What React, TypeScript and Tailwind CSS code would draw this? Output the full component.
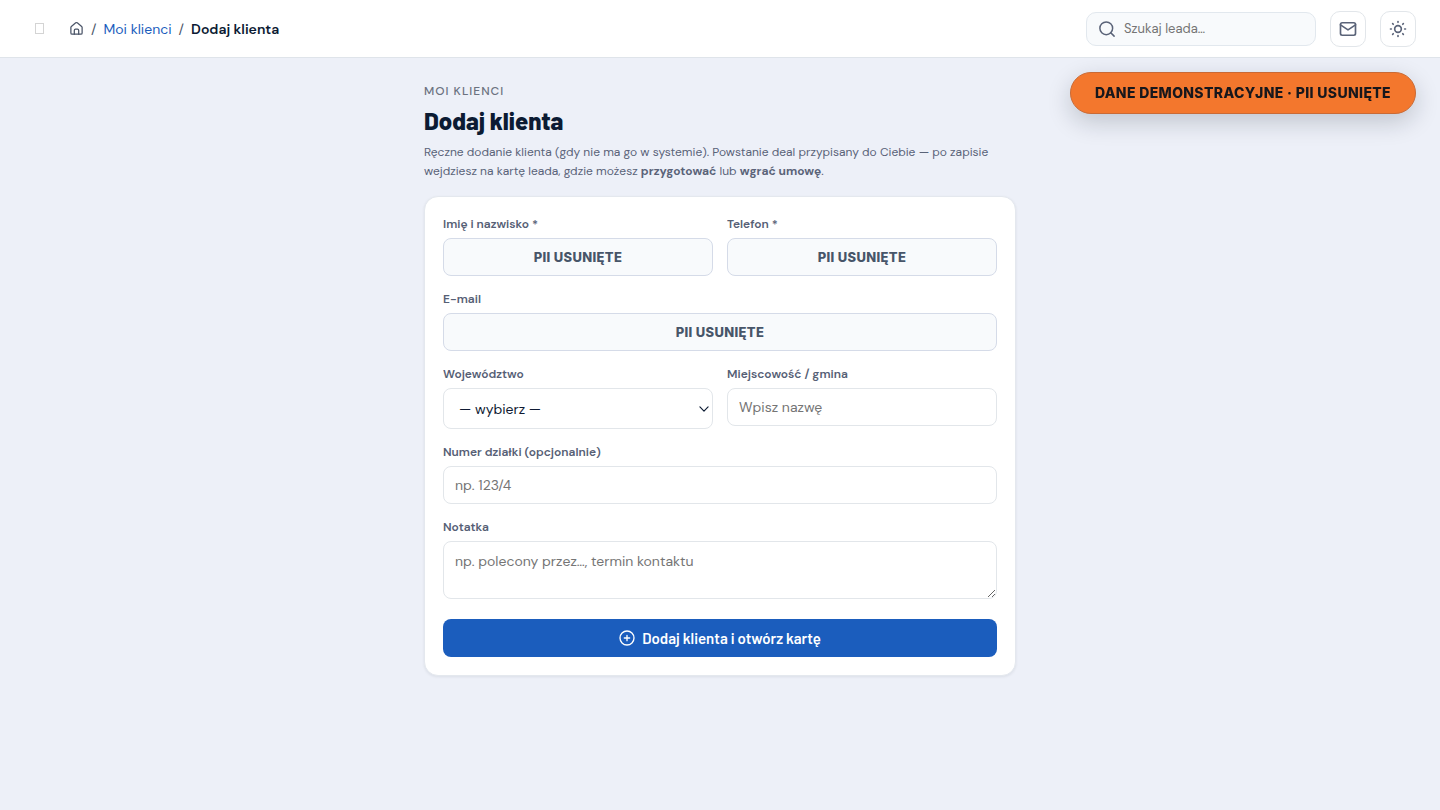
import type { ReactNode } from "react";

function PageIcon({ children, className }: { children: ReactNode; className: string }) {
  return (
    <svg
      viewBox="0 0 24 24"
      fill="none"
      stroke="currentColor"
      strokeWidth="2"
      strokeLinecap="round"
      strokeLinejoin="round"
      aria-hidden="true"
      className={className}
    >
      {children}
    </svg>
  );
}

const labelClass = "block truncate text-xs leading-[18px] font-semibold text-[#566075]";
const inputClass =
  "block h-[38px] w-full rounded-lg border border-[#e2e6ea] bg-white px-[11px] text-sm text-[#0f1b33] placeholder:text-[#757575]";
const redactedClass =
  "block h-[38px] w-full rounded-lg border border-[#d5dbe8] bg-[#f8fafc] px-[11px] text-center font-['Inter',sans-serif] text-[13px] font-extrabold tracking-wide text-[#475569]";

function Field({ id, label, wide, children }: { id: string; label: string; wide?: boolean; children: ReactNode }) {
  return (
    <div className={wide ? "flex flex-col gap-[5px] sm:col-span-2" : "flex flex-col gap-[5px]"}>
      <label htmlFor={id} className={labelClass}>
        {label}
      </label>
      {children}
    </div>
  );
}

function Header() {
  return (
    <header className="flex min-h-[58px] items-center justify-between gap-4 border-b border-[#dfe4ea] bg-white pr-6 pl-[35px]">
      <div className="flex items-center gap-[25px]">
        <button type="button" aria-label="Menu" className="h-[11px] w-[9px] border border-[#d4d4d4]" />
        <nav aria-label="Breadcrumb">
          <ol className="flex items-center gap-[7px] text-sm leading-5 text-[#4b5568]">
            <li>
              <a href="#start" aria-label="Start">
                <PageIcon className="h-[15px] w-[15px]">
                  <path d="M3 10.2a2 2 0 0 1 .75-1.55l7-5.7a2 2 0 0 1 2.5 0l7 5.7A2 2 0 0 1 21 10.2V19a2 2 0 0 1-2 2H5a2 2 0 0 1-2-2Z" />
                  <path d="M8.5 21v-6a2 2 0 0 1 2-2h3a2 2 0 0 1 2 2v6" />
                </PageIcon>
              </a>
            </li>
            <li aria-hidden="true">/</li>
            <li>
              <a href="#klienci" className="text-[#1b5dbd]">
                Moi klienci
              </a>
            </li>
            <li aria-hidden="true">/</li>
            <li aria-current="page" className="font-semibold text-[#0c1b33]">
              Dodaj klienta
            </li>
          </ol>
        </nav>
      </div>
      <div className="flex items-center gap-[14px] text-[#5a6378]">
        <label className="flex h-[34px] w-[230px] items-center gap-2 rounded-[10px] border border-[#e2e8ee] bg-[#f8fafc] px-[11px]">
          <PageIcon className="h-[18px] w-[18px] shrink-0">
            <circle cx="11" cy="11" r="8.5" />
            <path d="m21.5 21.5-4.5-4.5" />
          </PageIcon>
          <input
            type="search"
            aria-label="Szukaj leada"
            placeholder="Szukaj leada…"
            className="w-full min-w-0 bg-transparent text-[13px] placeholder:text-[#757575]"
          />
        </label>
        <button
          type="button"
          aria-label="Wiadomości"
          className="flex h-9 w-9 items-center justify-center rounded-[10px] border border-[#e2e6ea] bg-white"
        >
          <PageIcon className="h-5 w-5">
            <rect x="3" y="4.5" width="18" height="15" rx="2" />
            <path d="m3 7 9 6 9-6" />
          </PageIcon>
        </button>
        <button
          type="button"
          aria-label="Motyw"
          className="flex h-9 w-9 items-center justify-center rounded-[10px] border border-[#e2e6ea] bg-white"
        >
          <PageIcon className="h-5 w-5">
            <circle cx="12" cy="12" r="4" />
            <path d="M3 12h1M12 3v1M20 12h1M12 20v1M5.6 5.6l.7.7M18.4 5.6l-.7.7M17.7 17.7l.7.7M6.3 17.7l-.7.7" />
          </PageIcon>
        </button>
      </div>
    </header>
  );
}

export default function App() {
  return (
    <div className="min-h-screen bg-[#edf0f8] font-['DM_Sans',Inter,sans-serif] text-[#0c1b33]">
      <Header />
      <div className="fixed top-[72px] right-6 rounded-full border border-[#c96a35] bg-[#f3772d] px-6 py-[10px] font-['Inter',sans-serif] text-sm leading-5 font-extrabold tracking-wide text-[#17171c] shadow-[0_8px_24px_rgba(15,23,42,0.2)]">
        DANE DEMONSTRACYJNE · PII USUNIĘTE
      </div>
      <main className="mx-auto max-w-[592px] pt-6 pb-10">
        <p className="text-xs leading-[18px] font-medium tracking-[1px] text-[#6b7280]">MOI KLIENCI</p>
        <h1 className="mt-[6px] font-['Barlow',Roboto,sans-serif] text-2xl leading-[30px] font-extrabold">
          Dodaj klienta
        </h1>
        <p className="mt-[7px] text-xs leading-[19px] text-[#5a6378]">
          Ręczne dodanie klienta (gdy nie ma go w systemie). Powstanie deal przypisany do Ciebie — po zapisie wejdziesz
          na kartę leada, gdzie możesz <strong className="font-bold">przygotować</strong> lub{" "}
          <strong className="font-bold">wgrać umowę</strong>.
        </p>
        <form className="mt-[15px] rounded-[14px] border border-[#e4e8ee] bg-white p-[18px] shadow-[0_1px_3px_rgba(15,23,42,0.08)]">
          <div className="grid grid-cols-1 gap-[14px] sm:grid-cols-2">
            <Field id="name" label="Imię i nazwisko *">
              <input id="name" type="text" required defaultValue="PII USUNIĘTE" className={redactedClass} />
            </Field>
            <Field id="phone" label="Telefon *">
              <input id="phone" type="text" required defaultValue="PII USUNIĘTE" className={redactedClass} />
            </Field>
            <Field id="email" label="E-mail" wide>
              <input id="email" type="text" defaultValue="PII USUNIĘTE" className={redactedClass} />
            </Field>
            <Field id="region" label="Województwo">
              <div className="grid items-center">
                <select
                  id="region"
                  className="col-start-1 row-start-1 h-[41px] w-full appearance-none rounded-lg border border-[#e2e6ea] bg-white px-[15px] text-sm text-[#0f1b33]"
                >
                  <option>— wybierz —</option>
                </select>
                <PageIcon className="pointer-events-none col-start-1 row-start-1 mr-[2px] h-[14px] w-[14px] justify-self-end">
                  <path d="m5 8.5 7 7 7-7" />
                </PageIcon>
              </div>
            </Field>
            <Field id="town" label="Miejscowość / gmina">
              <input id="town" type="text" placeholder="Wpisz nazwę" className={inputClass} />
            </Field>
            <Field id="plot" label="Numer działki (opcjonalnie)" wide>
              <input id="plot" type="text" placeholder="np. 123/4" className={inputClass} />
            </Field>
            <Field id="note" label="Notatka" wide>
              <textarea
                id="note"
                placeholder="np. polecony przez…, termin kontaktu"
                className="block h-[58px] w-full resize rounded-lg border border-[#e2e6ea] bg-white px-[11px] py-[9px] text-sm leading-5 text-[#0f1b33] placeholder:text-[#757575]"
              />
            </Field>
          </div>
          <button
            type="submit"
            className="mt-5 flex h-[38px] w-full items-center justify-center gap-[7px] rounded-lg bg-[#1b5dbd] font-['Barlow',Roboto,sans-serif] text-[15px] font-semibold text-white"
          >
            <PageIcon className="h-4 w-4">
              <circle cx="12" cy="12" r="10.5" />
              <path d="M8 12h8M12 8v8" />
            </PageIcon>
            Dodaj klienta i otwórz kartę
          </button>
        </form>
      </main>
    </div>
  );
}
